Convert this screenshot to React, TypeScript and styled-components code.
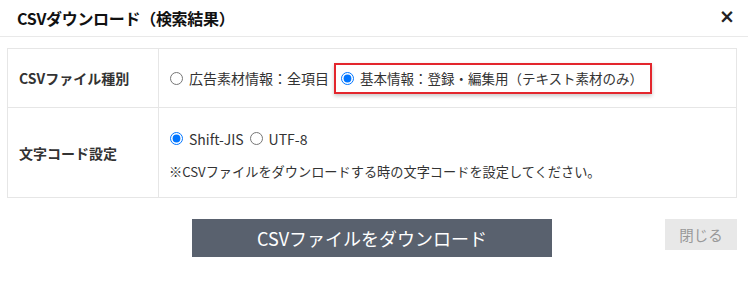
import styled, { createGlobalStyle } from "styled-components"

const GlobalStyle = createGlobalStyle`
	body {
		margin: 0;
		background: #fff;
		font-family: "Noto Sans CJK JP", "Noto Sans", sans-serif;
		color: #333;
	}
`

const App = () => {
	return (
		<Modal>
			<GlobalStyle />
			<Header>
				<Title>CSVダウンロード（検索結果）</Title>
				<CloseX>×</CloseX>
			</Header>
			<Body>
				<Table>
					<tbody>
						<tr>
							<LabelCell height={59}>CSVファイル種別</LabelCell>
							<ValueCell>
								<OptionRow>
									<Option>
										<Radio type="radio" name="kind" readOnly />
										広告素材情報：全項目
									</Option>
									<Highlight>
										<Option $size={13.5}>
											<Radio type="radio" name="kind" checked readOnly />
											基本情報：登録・編集用（テキスト素材のみ）
										</Option>
									</Highlight>
								</OptionRow>
							</ValueCell>
						</tr>
						<tr>
							<LabelCell height={90}>文字コード設定</LabelCell>
							<ValueCell $padTop={4}>
								<OptionRow>
									<Option>
										<Radio type="radio" name="enc" checked readOnly />
										Shift-JIS
									</Option>
									<Option>
										<Radio type="radio" name="enc" readOnly />
										UTF-8
									</Option>
								</OptionRow>
								<Note>※CSVファイルをダウンロードする時の文字コードを設定してください。</Note>
							</ValueCell>
						</tr>
					</tbody>
				</Table>
			</Body>
			<Footer>
				<DownloadButton>CSVファイルをダウンロード</DownloadButton>
				<CloseButton>閉じる</CloseButton>
			</Footer>
		</Modal>
	)
}

const Modal = styled.div`
	width: 748px;
	height: 281px;
	background: #fff;
`

const Header = styled.div`
	display: flex;
	align-items: center;
	justify-content: space-between;
	height: 36px;
	padding: 0 13px 0 17px;
	border-bottom: 1px solid #e9e9e9;
`

const Title = styled.h1`
	margin: 0;
	font-size: 16px;
	font-weight: bold;
	color: #111;
	letter-spacing: -0.3px;
`

const CloseX = styled.span`
	font-family: "DejaVu Sans", sans-serif;
	font-size: 19px;
	font-weight: bold;
	color: #222;
	line-height: 1;
	margin-top: -4px;
`

const Body = styled.div`
	padding: 11px 11px 0 7px;
`

const Table = styled.table`
	width: 730px;
	border-collapse: collapse;
	border: 1px solid #e6e6e6;
	td {
		border: 1px solid #e6e6e6;
	}
`

const LabelCell = styled.td<{ height: number }>`
	width: 139px;
	height: ${(p) => p.height - 1}px;
	padding: 0 0 0 11px;
	font-size: 14px;
	font-weight: bold;
	color: #333;
	vertical-align: middle;
`

const ValueCell = styled.td<{ $padTop?: number }>`
	padding: ${(p) => p.$padTop ?? 0}px 0 0 10px;
	vertical-align: middle;
`

const OptionRow = styled.div`
	display: flex;
	align-items: center;
	gap: 5px;
`

const Option = styled.label<{ $size?: number }>`
	display: flex;
	align-items: center;
	font-size: ${(p) => p.$size ?? 14}px;
	color: #333;
	white-space: nowrap;
`

const Radio = styled.input`
	width: 13px;
	height: 13px;
	margin: 0 6px 0 1px;
`

const Highlight = styled.div`
	display: flex;
	align-items: center;
	height: 27px;
	padding: 0 7px 0 4px;
	border: 2px solid #e3262d;
	box-shadow: 0 2px 4px rgba(0, 0, 0, 0.22);
`

const Note = styled.p`
	margin: 13px 0 0;
	font-size: 13.2px;
	color: #333;
`

const Footer = styled.div`
	display: flex;
	justify-content: flex-end;
	align-items: flex-start;
	padding: 21px 11px 0 192px;
`

const DownloadButton = styled.button`
	width: 360px;
	height: 38px;
	margin-right: auto;
	border: none;
	background: #59616e;
	color: #fff;
	font-family: "Noto Sans CJK JP", sans-serif;
	font-size: 18px;
`

const CloseButton = styled.button`
	width: 72px;
	height: 31px;
	border: none;
	background: #e8e8e8;
	color: #999;
	font-family: "Noto Sans CJK JP", sans-serif;
	font-size: 14.5px;
`

export default App
